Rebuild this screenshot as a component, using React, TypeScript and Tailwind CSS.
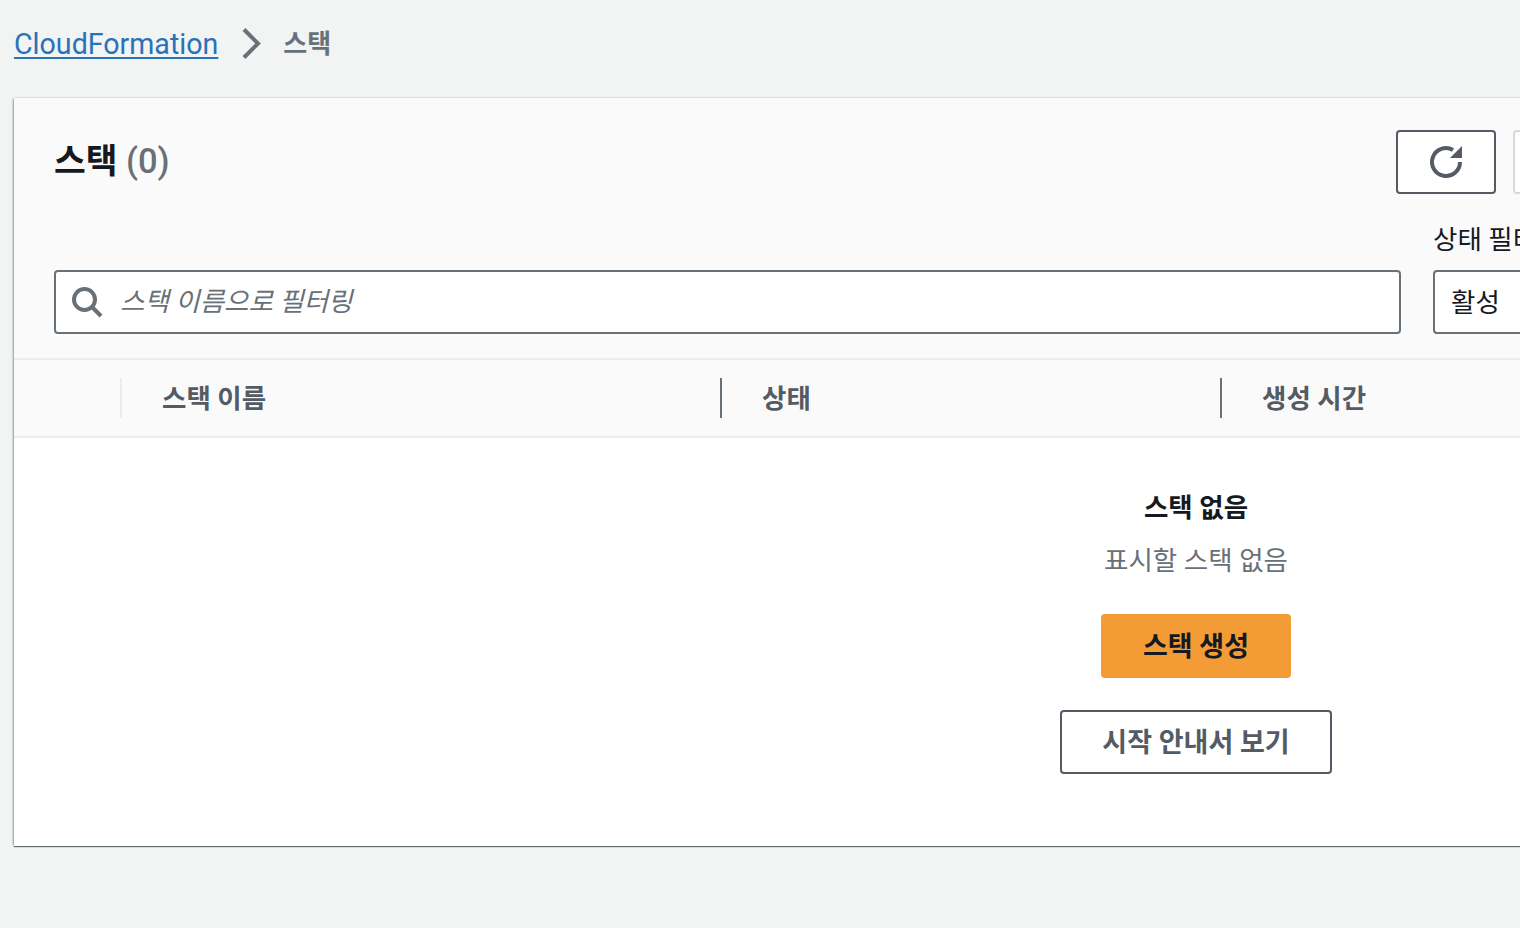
const font = "font-['Roboto','Noto_Sans_CJK_KR',sans-serif]";

const columns = [
  { label: "스택 이름", className: "w-[600px] border-[#eaeded]" },
  { label: "상태", className: "w-[500px] border-[#687078]" },
  { label: "생성 시간", className: "w-[500px] border-[#687078]" },
];

export default function App() {
  return (
    <div className={`${font} w-[1520px] h-[928px] overflow-hidden bg-[#f2f3f3] text-[#16191f]`}>
      {/* breadcrumb */}
      <div className="flex items-center h-[98px] pl-[14px] pb-[10px]">
        <a className="text-[28.6px] text-[#2a72b8] underline underline-offset-[3px] decoration-2 leading-none">CloudFormation</a>
        <svg className="ml-[21px] mr-[18px]" width="26" height="32" viewBox="0 0 26 32" fill="none">
          <path d="M5 1.5L19 15.5L5 29.5" stroke="#687078" strokeWidth="4" />
        </svg>
        <span className="text-[#687078] font-semibold text-[26px] leading-none">스택</span>
      </div>

      {/* panel */}
      <div className="ml-[14px] w-[2364px] h-[748px] flex flex-col bg-white shadow-[0_1px_1px_0_#5f6b6b,0_-1px_1px_0_rgba(0,28,36,0.06),-2px_0_2px_-1px_rgba(0,28,36,0.35)]">
        <div className="h-[262px] shrink-0 bg-[#fafafa] px-10 pt-8 border-b-2 border-[#eaeded]">
          <div className="flex justify-between items-start h-[64px]">
            <h1 className="text-[34.5px] leading-[62px] font-bold">
              스택 <span className="font-medium text-[#687078]">(0)</span>
            </h1>
            <div className="flex gap-[17px] w-[942px]">
              <button className="w-[100px] h-[64px] flex items-center justify-center bg-white border-2 border-[#545b64] rounded-[4px]">
                <svg width="36" height="36" viewBox="0 0 36 36" fill="none">
                  <path d="M32 18A14 14 0 1 1 25 5.9" stroke="#545b64" strokeWidth="4" />
                  <path d="M22 14H34V2L22 14Z" fill="#545b64" />
                </svg>
              </button>
              <button className="w-[100px] h-[64px] bg-white border-2 border-[#d5dbdb] rounded-[4px]" />
            </div>
          </div>
          <div className="flex items-end gap-[32px] mt-[32px]">
            <div className="w-[1347px] h-[64px] flex items-center bg-white border-2 border-[#687078] rounded-[4px] pl-[15px]">
              <svg width="32" height="32" viewBox="0 0 32 32" fill="none">
                <circle cx="13.5" cy="13.5" r="10.5" stroke="#687078" strokeWidth="4" />
                <path d="M21 21L30 30" stroke="#687078" strokeWidth="4" />
              </svg>
              <span className="ml-[17px] pt-[1px] italic text-[26.5px] text-[#687078] leading-none">스택 이름으로 필터링</span>
            </div>
            <div className="w-[400px]">
              <div className="text-[26.5px] leading-[28px] mb-[16px]">상태 필터</div>
              <div className="h-[64px] flex items-center bg-white border-2 border-[#687078] rounded-[4px] pl-[16px] pt-[1px] text-[26.5px]">
                활성
              </div>
            </div>
          </div>
        </div>

        {/* table head */}
        <div className="h-[78px] shrink-0 flex items-center bg-[#fafafa] border-b-2 border-[#eaeded]">
          <div className="w-[106px] shrink-0" />
          {columns.map((col) => (
            <div key={col.label} className={`${col.className} h-[40px] shrink-0 flex items-center pl-[40px] pt-[1px] border-l-2 text-[26.5px] font-bold text-[#545b64]`}>
              {col.label}
            </div>
          ))}
        </div>

        {/* empty state */}
        <div className="flex-1 flex flex-col items-center pt-[50px]">
          <div className="text-[26.5px] leading-[40px] font-bold">스택 없음</div>
          <div className="text-[26.5px] leading-[40px] mt-[13px] text-[#687078]">표시할 스택 없음</div>
          <button className="mt-[33px] w-[190px] h-[64px] pt-[2px] rounded-[4px] bg-[#f39c35] text-[27px] font-bold">스택 생성</button>
          <button className="mt-[32px] w-[272px] h-[64px] pt-[2px] rounded-[4px] bg-white border-2 border-[#545b64] text-[27px] font-bold text-[#545b64]">
            시작 안내서 보기
          </button>
        </div>
      </div>
    </div>
  );
}
